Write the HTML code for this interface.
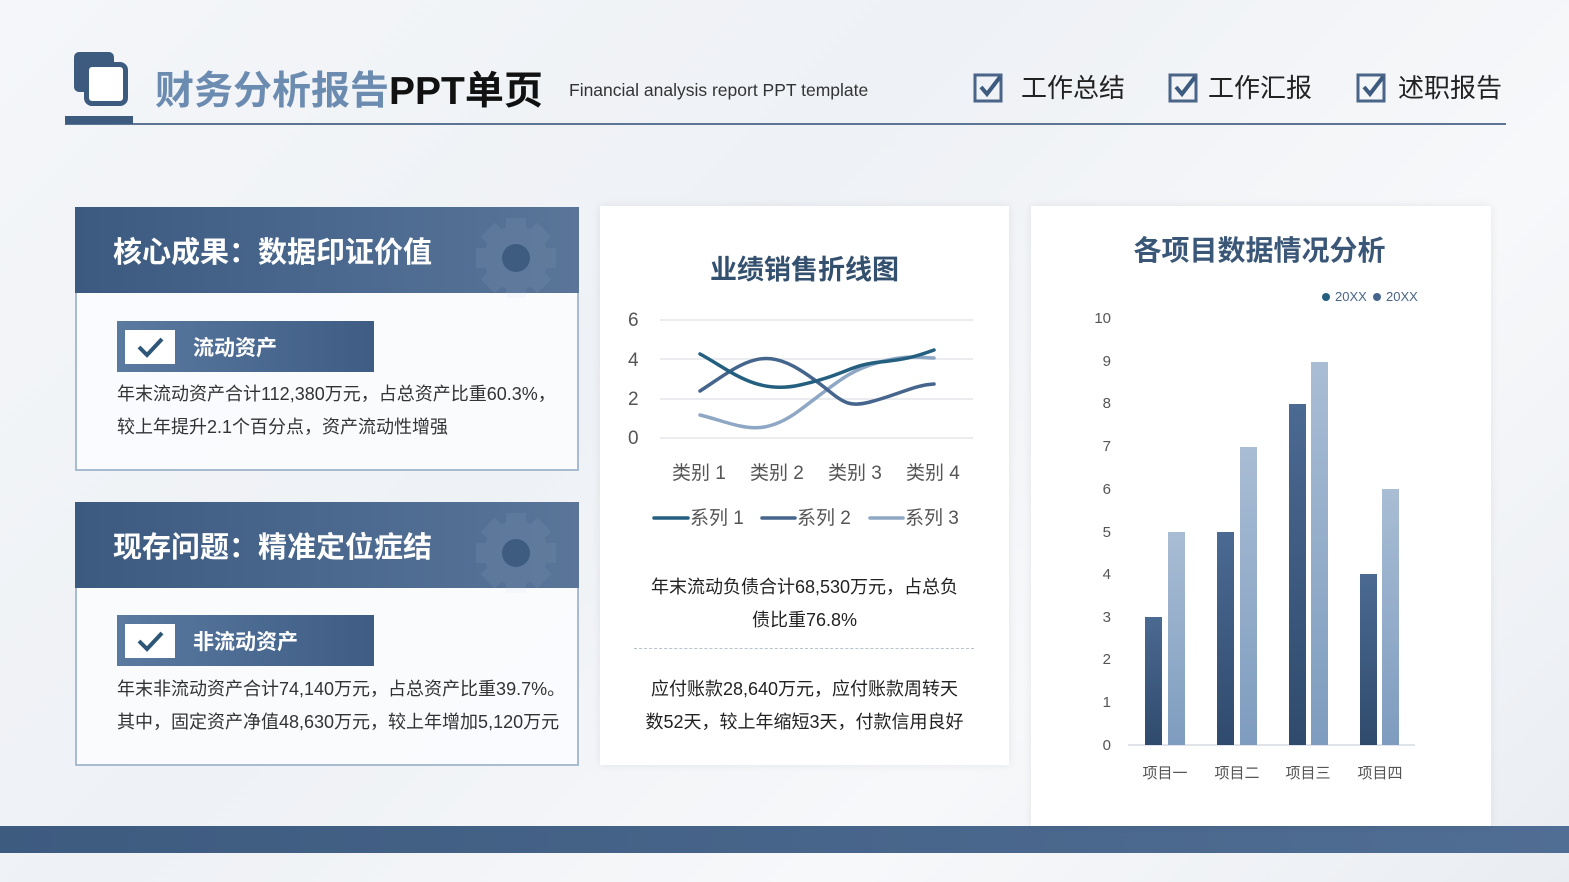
<!DOCTYPE html>
<html><head><meta charset="utf-8"><style>
*{margin:0;padding:0;box-sizing:border-box}
body{width:1569px;height:882px;overflow:hidden;position:relative;font-family:"Liberation Sans","Noto Sans CJK SC",sans-serif;background:linear-gradient(135deg,#f4f6f9 0%,#eef1f5 40%,#f7f8fa 70%,#e9edf2 100%)}
.abs{position:absolute}
.hdr{background:linear-gradient(90deg,#3c5a80,#4d6a90 60%,#5a7598);color:#fff;font-weight:bold;font-size:29px;padding-left:38px;display:flex;align-items:center}
.body{background:rgba(250,252,254,.9);border:2px solid #a9bbd0;border-top:none}
.tag{background:linear-gradient(90deg,#5a7aa0,#3e5c84);color:#fff;font-weight:bold;font-size:21px;display:flex;align-items:center}
.tag .cb{width:50px;height:34px;background:#fff;margin:0 18px 0 8px;display:flex;align-items:center;justify-content:center}
.txt{font-size:18px;color:#333;line-height:33px;white-space:nowrap}
.card{background:#fff;box-shadow:0 0 8px rgba(0,0,0,.08)}
.chk{display:flex;align-items:center;font-size:26px;color:#222}
</style></head><body>
<div class="abs" style="left:74px;top:52px;width:40px;height:40px;background:#3d5a7f;border-radius:5px"></div>
<div class="abs" style="left:84px;top:62px;width:44px;height:44px;background:#fff;border:5px solid #3d5a7f;border-radius:8px"></div>
<div class="abs" style="left:155px;top:60px;font-size:39px;font-weight:bold;white-space:nowrap"><span style="color:#6b8bb0">财务分析报告</span><span style="color:#111">PPT单页</span></div>
<div class="abs" style="left:569px;top:80px;font-size:17.5px;color:#333">Financial analysis report PPT template</div>
<div class="abs" style="left:65px;top:123px;width:1441px;height:2px;background:#5c7594"></div>
<div class="abs" style="left:65px;top:116px;width:68px;height:8px;background:#3d5a7f"></div>
<div class="abs chk" style="left:973px;top:68px">
<svg width="32" height="32" viewBox="0 0 32 32"><rect x="2" y="4" width="26" height="26" fill="none" stroke="#4a6588" stroke-width="3"/><path d="M8 16l6 7 13-17" fill="none" stroke="#3d5a7f" stroke-width="4"/></svg><span style="margin-left:16px">工作总结</span></div>
<div class="abs chk" style="left:1168px;top:68px">
<svg width="32" height="32" viewBox="0 0 32 32"><rect x="2" y="4" width="26" height="26" fill="none" stroke="#4a6588" stroke-width="3"/><path d="M8 16l6 7 13-17" fill="none" stroke="#3d5a7f" stroke-width="4"/></svg><span style="margin-left:8px">工作汇报</span></div>
<div class="abs chk" style="left:1356px;top:68px">
<svg width="32" height="32" viewBox="0 0 32 32"><rect x="2" y="4" width="26" height="26" fill="none" stroke="#4a6588" stroke-width="3"/><path d="M8 16l6 7 13-17" fill="none" stroke="#3d5a7f" stroke-width="4"/></svg><span style="margin-left:10px">述职报告</span></div>

<div class="abs hdr" style="left:75px;top:207px;width:504px;height:86px">核心成果：数据印证价值</div>
<svg class="abs" style="left:470px;top:212px" width="92" height="92" viewBox="0 0 92 92"><g fill="#6f88a8" opacity=".35"><circle cx="46" cy="46" r="32"/><rect x="36" y="6" width="20" height="80"/><rect x="6" y="36" width="80" height="20"/><rect x="36" y="6" width="20" height="80" transform="rotate(45 46 46)"/><rect x="36" y="6" width="20" height="80" transform="rotate(-45 46 46)"/></g><circle cx="46" cy="46" r="14" fill="#3e5b80"/></svg>
<div class="abs body" style="left:75px;top:293px;width:504px;height:178px"></div>
<div class="abs tag" style="left:117px;top:321px;width:257px;height:51px"><div class="cb"><svg width="28" height="22"><path d="M3 11l8 8 15-16" fill="none" stroke="#2e5677" stroke-width="4"/></svg></div>流动资产</div>
<div class="abs txt" style="left:117px;top:378px">年末流动资产合计112,380万元，占总资产比重60.3%，<br>较上年提升2.1个百分点，资产流动性增强</div>

<div class="abs hdr" style="left:75px;top:502px;width:504px;height:86px">现存问题：精准定位症结</div>
<svg class="abs" style="left:470px;top:507px" width="92" height="92" viewBox="0 0 92 92"><g fill="#6f88a8" opacity=".35"><circle cx="46" cy="46" r="32"/><rect x="36" y="6" width="20" height="80"/><rect x="6" y="36" width="80" height="20"/><rect x="36" y="6" width="20" height="80" transform="rotate(45 46 46)"/><rect x="36" y="6" width="20" height="80" transform="rotate(-45 46 46)"/></g><circle cx="46" cy="46" r="14" fill="#3e5b80"/></svg>
<div class="abs body" style="left:75px;top:588px;width:504px;height:178px"></div>
<div class="abs tag" style="left:117px;top:615px;width:257px;height:51px"><div class="cb"><svg width="28" height="22"><path d="M3 11l8 8 15-16" fill="none" stroke="#2e5677" stroke-width="4"/></svg></div>非流动资产</div>
<div class="abs txt" style="left:117px;top:673px">年末非流动资产合计74,140万元，占总资产比重39.7%。<br>其中，固定资产净值48,630万元，较上年增加5,120万元</div>

<div class="abs" style="left:0;top:826px;width:1569px;height:27px;background:linear-gradient(90deg,#3d5a7f,#506d93)"></div>

<div class="abs card" style="left:600px;top:206px;width:409px;height:559px"></div>
<div class="abs" style="left:600px;top:248px;width:409px;text-align:center;font-size:27px;font-weight:bold;color:#34506f">业绩销售折线图</div>
<svg class="abs" style="left:600px;top:300px" width="409" height="240" viewBox="600 300 409 240">
<g stroke="#e3e6ea" stroke-width="1.5"><line x1="660" y1="320" x2="973" y2="320"/><line x1="660" y1="359" x2="973" y2="359"/><line x1="660" y1="399" x2="973" y2="399"/><line x1="660" y1="438" x2="973" y2="438"/></g>
<g font-size="19" fill="#555" font-family="Liberation Sans,Noto Sans CJK SC,sans-serif"><text x="628" y="326">6</text><text x="628" y="366">4</text><text x="628" y="405">2</text><text x="628" y="444">0</text>
<text x="672" y="479">类别 1</text><text x="750" y="479">类别 2</text><text x="828" y="479">类别 3</text><text x="906" y="479">类别 4</text>
<text x="690" y="524">系列 1</text><text x="797" y="524">系列 2</text><text x="905" y="524">系列 3</text></g>
<g fill="none" stroke-width="3.5" stroke-linecap="round">
<path d="M700 415 C740 425,760 440,800 410 S850 370,880 362 S920 358,934 358" stroke="#8ea7c4"/>
<path d="M700 391 C740 365,760 345,800 370 S840 410,870 402 S915 385,934 384" stroke="#46658c"/>
<path d="M700 354 C730 370,755 395,800 385 S850 365,880 362 S920 355,934 350" stroke="#245f80"/>
<line x1="654" y1="518" x2="688" y2="518" stroke="#245f80"/><line x1="762" y1="518" x2="795" y2="518" stroke="#46658c"/><line x1="870" y1="518" x2="903" y2="518" stroke="#8ea7c4"/>
</g></svg>
<div class="abs" style="left:600px;top:571px;width:409px;text-align:center;font-size:18px;line-height:33px;color:#222">年末流动负债合计68,530万元，占总负<br>债比重76.8%</div>
<div class="abs" style="left:634px;top:648px;width:340px;border-top:1.5px dashed #b9c3cf"></div>
<div class="abs" style="left:600px;top:673px;width:409px;text-align:center;font-size:18px;line-height:33px;color:#222">应付账款28,640万元，应付账款周转天<br>数52天，较上年缩短3天，付款信用良好</div>

<div class="abs card" style="left:1031px;top:206px;width:460px;height:620px"></div>
<div class="abs" style="left:1031px;top:229px;width:460px;text-align:center;font-size:28px;font-weight:bold;color:#3b5778;padding-right:3px">各项目数据情况分析</div>
<svg class="abs" style="left:1031px;top:206px" width="460" height="620" viewBox="1031 206 460 620">
<g font-size="13" fill="#4a6588"><circle cx="1326" cy="297" r="4" fill="#245f80"/><text x="1335" y="301">20XX</text><circle cx="1377" cy="297" r="4" fill="#46658c"/><text x="1386" y="301">20XX</text></g>
<g font-size="15" fill="#555" text-anchor="end">
<text x="1111" y="323">10</text><text x="1111" y="366">9</text><text x="1111" y="408">8</text><text x="1111" y="451">7</text><text x="1111" y="494">6</text><text x="1111" y="537">5</text><text x="1111" y="579">4</text><text x="1111" y="622">3</text><text x="1111" y="664">2</text><text x="1111" y="707">1</text><text x="1111" y="750">0</text></g>
<line x1="1128" y1="745" x2="1415" y2="745" stroke="#d6dbe1" stroke-width="1.5"/>
<defs><linearGradient id="d" x1="0" y1="0" x2="0" y2="1"><stop offset="0" stop-color="#4b6a92"/><stop offset="1" stop-color="#2f4a6c"/></linearGradient><linearGradient id="l" x1="0" y1="0" x2="0" y2="1"><stop offset="0" stop-color="#a9bdd4"/><stop offset="1" stop-color="#7e9cbf"/></linearGradient></defs>
<g fill="url(#d)"><rect x="1145" y="617" width="17" height="128"/><rect x="1217" y="532" width="17" height="213"/><rect x="1289" y="404" width="17" height="341"/><rect x="1360" y="574" width="17" height="171"/></g>
<g fill="url(#l)"><rect x="1168" y="532" width="17" height="213"/><rect x="1240" y="447" width="17" height="298"/><rect x="1311" y="362" width="17" height="383"/><rect x="1382" y="489" width="17" height="256"/></g>
<g font-size="15" fill="#555" text-anchor="middle"><text x="1165" y="778">项目一</text><text x="1237" y="778">项目二</text><text x="1308" y="778">项目三</text><text x="1380" y="778">项目四</text></g>
</svg>
</body></html>
